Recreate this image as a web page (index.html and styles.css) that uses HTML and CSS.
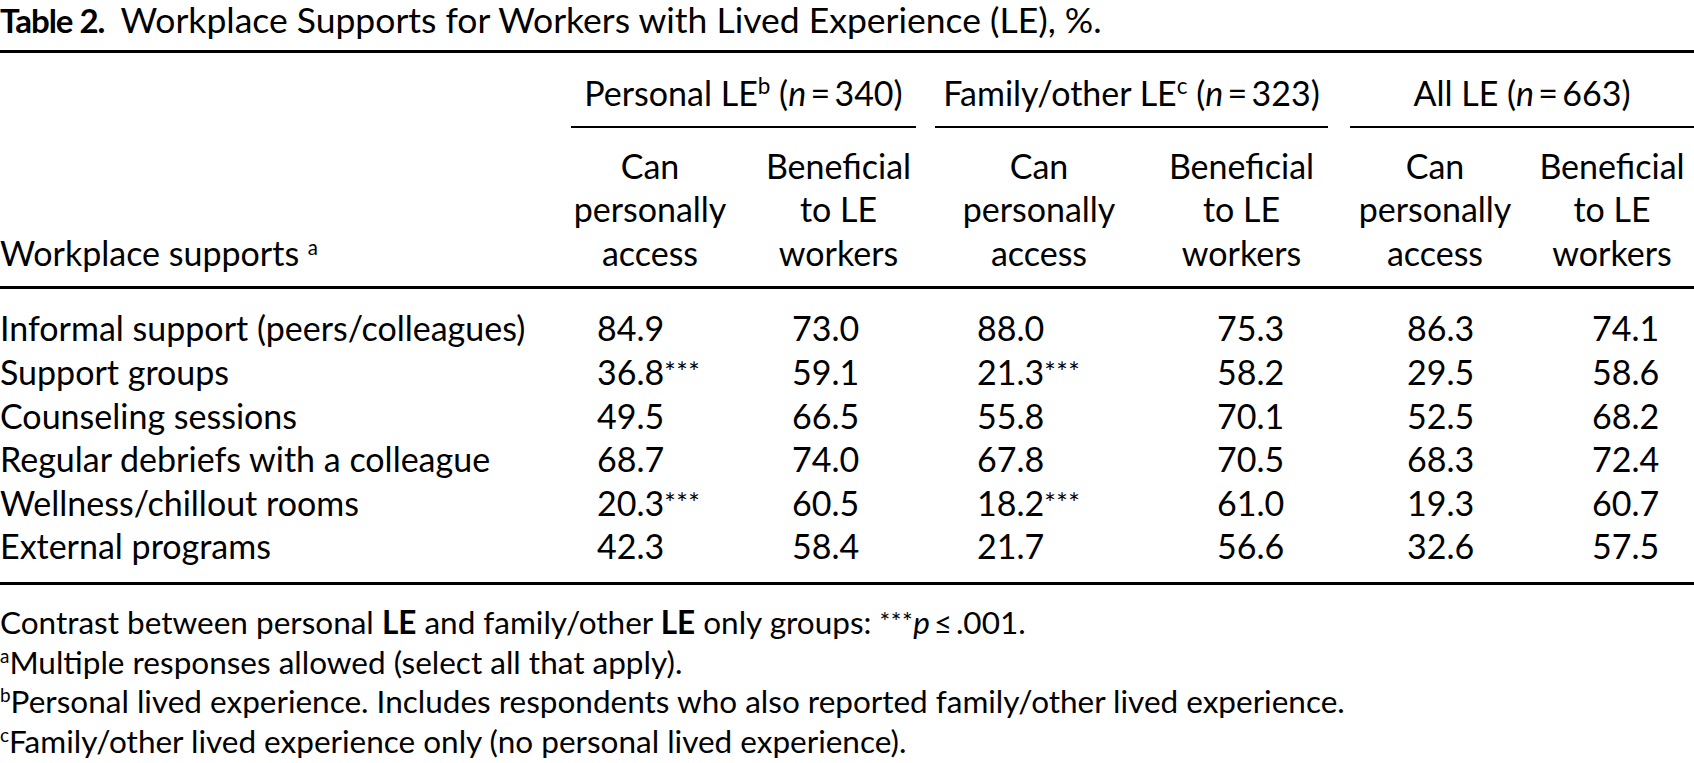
FILE: index.html
```html
<!DOCTYPE html>
<html lang="en">
<head>
<meta charset="utf-8">
<title>Table 2</title>
<link rel="stylesheet" href="styles.css">
</head>
<body>
<div class="page">
  <p class="caption"><b>Table 2.</b> <span class="cap-text">Workplace Supports for Workers with Lived Experience (LE), %.</span></p>
  <table class="tbl">
    <colgroup>
      <col class="w0"><col class="w1"><col class="w2"><col class="w3"><col class="w4"><col class="w5"><col class="w6">
    </colgroup>
    <thead>
      <tr class="grp">
        <th></th>
        <th colspan="2"><div class="gr g1">Personal LE<sup>b</sup> (<i>n</i>&#8201;=&#8201;340)</div></th>
        <th colspan="2"><div class="gr g2">Family/other LE<sup>c</sup> (<i>n</i>&#8201;=&#8201;323)</div></th>
        <th colspan="2"><div class="gr g3">All LE (<i>n</i>&#8201;=&#8201;663)</div></th>
      </tr>
      <tr class="sub">
        <th class="stub">Workplace supports <sup>a</sup></th>
        <th>Can<br>personally<br>access</th>
        <th>Beneficial<br>to LE<br>workers</th>
        <th>Can<br>personally<br>access</th>
        <th>Beneficial<br>to LE<br>workers</th>
        <th>Can<br>personally<br>access</th>
        <th>Beneficial<br>to LE<br>workers</th>
      </tr>
    </thead>
    <tbody>
      <tr><td>Informal support (peers/colleagues)</td><td>84.9</td><td>73.0</td><td>88.0</td><td>75.3</td><td>86.3</td><td>74.1</td></tr>
      <tr><td>Support groups</td><td>36.8<span class="sig">***</span></td><td>59.1</td><td>21.3<span class="sig">***</span></td><td>58.2</td><td>29.5</td><td>58.6</td></tr>
      <tr><td>Counseling sessions</td><td>49.5</td><td>66.5</td><td>55.8</td><td>70.1</td><td>52.5</td><td>68.2</td></tr>
      <tr><td>Regular debriefs with a colleague</td><td>68.7</td><td>74.0</td><td>67.8</td><td>70.5</td><td>68.3</td><td>72.4</td></tr>
      <tr><td>Wellness/chillout rooms</td><td>20.3<span class="sig">***</span></td><td>60.5</td><td>18.2<span class="sig">***</span></td><td>61.0</td><td>19.3</td><td>60.7</td></tr>
      <tr><td>External programs</td><td>42.3</td><td>58.4</td><td>21.7</td><td>56.6</td><td>32.6</td><td>57.5</td></tr>
    </tbody>
  </table>
  <div class="notes">
    <p>Contrast between personal <b>LE</b> and family/other <b>LE</b> only groups: <span class="sig">***</span><i>p</i>&#8201;≤&#8201;.001.</p>
    <p><sup>a</sup>Multiple responses allowed (select all that apply).</p>
    <p><sup>b</sup>Personal lived experience. Includes respondents who also reported family/other lived experience.</p>
    <p><sup>c</sup>Family/other lived experience only (no personal lived experience).</p>
  </div>
</div>
</body>
</html>
```

FILE: styles.css
```css
html, body {
  margin: 0;
  padding: 0;
  background: #ffffff;
}

body {
  font-family: "Lato", "Open Sans", "DejaVu Sans", sans-serif;
  color: #000000;
  font-size: 34px;
}

.page {
  width: 1694px;
}

.caption {
  margin: 0;
  line-height: 40px;
  height: 40px;
  font-size: 35.5px;
  white-space: nowrap;
}

.caption b {
  font-weight: 700;
  font-size: 33px;
  letter-spacing: -1px;
}

.cap-text {
  margin-left: 7px;
}

.tbl {
  margin-top: 10px;
  width: 1694px;
  border-collapse: collapse;
  table-layout: fixed;
  border-top: 3px solid #000;
  border-bottom: 3px solid #000;
}

.w0 { width: 558px; }
.w1 { width: 184px; }
.w2 { width: 193px; }
.w3 { width: 208px; }
.w4 { width: 197px; }
.w5 { width: 190px; }
.w6 { width: 164px; }

.tbl th {
  font-weight: 400;
  padding: 0;
  line-height: 43.6px;
  text-align: center;
  vertical-align: bottom;
  white-space: nowrap;
}

.grp th {
  padding-top: 18px;
}

.gr {
  border-bottom: 2.5px solid #000;
  padding-bottom: 11px;
  white-space: nowrap;
}

.g1 { margin-left: 13px; margin-right: 19px; }
.g2 { margin-left: 0; margin-right: 12px; }
.g3 { margin-left: 10px; margin-right: 0; }

.sub th {
  padding-top: 16px;
  padding-bottom: 12px;
  border-bottom: 3px solid #000;
}

.sub th.stub {
  text-align: left;
}

.tbl sup {
  font-size: 0.66em;
  line-height: 0;
  vertical-align: 0.55em;
}

.stub sup {
  font-size: 0.6em;
}

.tbl td {
  padding: 0;
  line-height: 43.6px;
  white-space: nowrap;
  text-align: left;
}

.tbl tbody tr:first-child td { padding-top: 17px; }
.tbl tbody tr:last-child td { padding-bottom: 14px; }

.tbl td:nth-child(2) { padding-left: 39px; }
.tbl td:nth-child(3) { padding-left: 50px; }
.tbl td:nth-child(4) { padding-left: 42px; }
.tbl td:nth-child(5) { padding-left: 74px; }
.tbl td:nth-child(6) { padding-left: 67px; }
.tbl td:nth-child(7) { padding-left: 62px; }

.sig {
  font-size: 0.8em;
  vertical-align: 0.12em;
  line-height: 0;
  letter-spacing: 0.5px;
}

.notes {
  margin-top: 18px;
  font-size: 31.5px;
}

.notes p {
  margin: 0;
  line-height: 39.6px;
  white-space: nowrap;
}

.notes sup {
  font-size: 0.6em;
  line-height: 0;
  vertical-align: 0.6em;
}

.notes b {
  font-weight: 700;
}
```
